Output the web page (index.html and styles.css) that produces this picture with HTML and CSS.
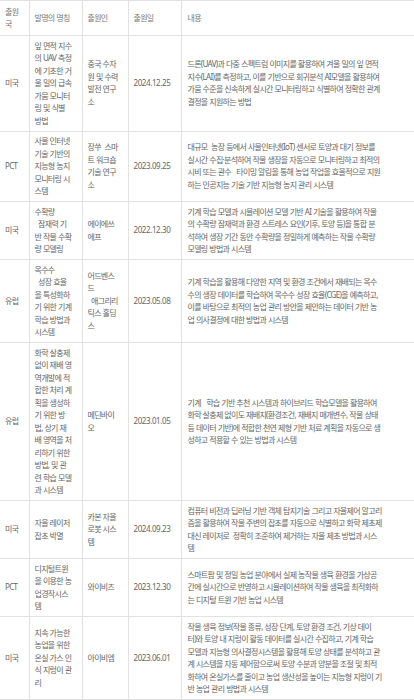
FILE: index.html
```html
<!DOCTYPE html>
<html lang="ko">
<head>
<meta charset="utf-8">
<title>특허 목록</title>
<link rel="stylesheet" href="styles.css">
</head>
<body>
<table class="patents">
  <colgroup>
    <col class="c-country">
    <col class="c-title">
    <col class="c-applicant">
    <col class="c-date">
    <col class="c-desc">
  </colgroup>
  <thead>
    <tr>
      <th>출원<br>국</th>
      <th>발명의 명칭</th>
      <th>출원인</th>
      <th>출원일</th>
      <th class="desc">내용</th>
    </tr>
  </thead>
  <tbody>
    <tr>
      <td>미국</td>
      <td>잎 면적 지수<br>의 UAV 측정<br>에 기초한 거<br>울 밀의 급속<br>가뭄 모니터<br>링 및 식별<br>방법</td>
      <td>중국 수자<br>원 및 수력<br>발전 연구<br>소</td>
      <td class="date">2024.12.25</td>
      <td class="desc">드론(UAV)과 다중 스펙트럼 이미지를 활용하여 겨울 밀의 잎 면적<br>지수(LAI)를 측정하고, 이를 기반으로 회귀분석 AI모델을 활용하여<br>가뭄 수준을 신속하게 실시간 모니터링하고 식별하여 정확한 관계<br>결정을 지원하는 방법</td>
    </tr>
    <tr>
      <td>PCT</td>
      <td>사물 인터넷<br>기술 기반의<br>지능형 농지<br>모니터링 시<br>스템</td>
      <td>장쑤&nbsp; 스마<br>트 워크숍<br>기술 연구<br>소</td>
      <td class="date">2023.09.25</td>
      <td class="desc">대규모&nbsp; 농장 등에서 사물인터넷(IoT) 센서로 토양과 대기 정보를<br>실시간 수집·분석하여 작물 생장을 자동으로 모니터링하고 최적의<br>시비 또는 관수&nbsp; &nbsp;타이밍 알림을 통해 농업 작업을 효율적으로 지원<br>하는 인공지능 기술 기반 지능형 농지 관리 시스템</td>
    </tr>
    <tr>
      <td>미국</td>
      <td>수확량<br>&nbsp; 잠재력 기<br>반 작물 수확<br>량 모델링</td>
      <td>에이에쓰<br>에프</td>
      <td class="date">2022.12.30</td>
      <td class="desc">기계 학습 모델과 시뮬레이션 모델 기반 AI 기술을 활용하여 작물<br>의 수확량 잠재력과 환경 스트레스 요인(기후, 토양 등)을 통합 분<br>석하여 생장 기간 동안 수확량을 정밀하게 예측하는 작물 수확량<br>모델링 방법과 시스템</td>
    </tr>
    <tr>
      <td>유럽</td>
      <td>옥수수<br>&nbsp; 성장 효율<br>을 특성화하<br>기 위한 기계<br>학습 방법과<br>시스템</td>
      <td>어드벤스<br>드<br>&nbsp; 애그리리<br>틱스 홀딩<br>스</td>
      <td class="date">2023.05.08</td>
      <td class="desc">기계 학습을 활용해 다양한 지역 및 환경 조건에서 재배되는 옥수<br>수의 생장 데이터를 학습하여 옥수수 성장 효율(CGE)을 예측하고,<br>이를 바탕으로 최적의 농업 관리 방안을 제안하는 데이터 기반 농<br>업 의사결정에 대한 방법과 시스템</td>
    </tr>
    <tr>
      <td>유럽</td>
      <td>화학 살충제<br>없이 재배 영<br>역개발에 적<br>합한 처리 계<br>획을 생성하<br>기 위한 방<br>법, 상기 재<br>배 영역을 처<br>리하기 위한<br>방법, 및 관<br>련 학습 모델<br>과 시스템</td>
      <td>메딘바이<br>오</td>
      <td class="date">2023.01.05</td>
      <td class="desc">기계&nbsp; &nbsp;학습 기반 추천 시스템과 하이브리드 학습모델을 활용하여<br>화학 살충제 없이도 재배지(환경조건, 재배지 매개변수, 작물 상태<br>등 데이터 기반)에 적합한 천연 제형 기반 처료 계획을 자동으로 생<br>성하고 적용할 수 있는 방법과 시스템</td>
    </tr>
    <tr>
      <td>미국</td>
      <td>자율 레이저<br>잡초 박멸</td>
      <td>카본 자율<br>로봇 시스<br>템</td>
      <td class="date">2024.09.23</td>
      <td class="desc">컴퓨터 비전과 딥러닝 기반 객체 탐지기술 그리고 자율제어 알고리<br>즘을 활용하여 작물 주변의 잡초를 자동으로 식별하고 화학 제초제<br>대신 레이저로&nbsp; 정확히 조준하여 제거하는 자율 제초 방법과 시스<br>템</td>
    </tr>
    <tr>
      <td>PCT</td>
      <td>디지털트윈<br>을 이용한 농<br>업경작시스<br>템</td>
      <td>와이비즈</td>
      <td class="date">2023.12.30</td>
      <td class="desc">스마트팜 및 정밀 농업 분야에서 실제 농작물 생육 환경을 가상공<br>간에 실시간으로 반영하고 시뮬레이션하여 작물 생육을 최적화하<br>는 디지털 트윈 기반 농업 시스템</td>
    </tr>
    <tr>
      <td>미국</td>
      <td>지속 가능한<br>농업을 위한<br>온실 가스 인<br>식 지렁이 관<br>리</td>
      <td>아이비엠</td>
      <td class="date">2023.06.01</td>
      <td class="desc">작물 생육 정보(작물 종류, 성장 단계, 토양 환경 조건, 기상 데이<br>터)와 토양 내 지렁이 활동 데이터를 실시간 수집하고, 기계 학습<br>모델과 지능형 의사결정시스템을 활용해 토양 상태를 분석하고 관<br>계 시스템을 자동 제어함으로써 토양 수분과 양분을 조절 및 최적<br>화하여 온실가스를 줄이고 농업 생산성을 높이는 지능형 지렁이 기<br>반 농업 관리 방법과 시스템</td>
    </tr>
  </tbody>
</table>
</body>
</html>
```

FILE: styles.css
```css
html, body {
  margin: 0;
  padding: 0;
  background: #fff;
}

body {
  font-family: "Noto Sans", "Noto Sans CJK KR", sans-serif;
  font-size: 8px;
  letter-spacing: -0.7px;
  word-spacing: 0.4px;
  line-height: 12.5px;
  color: #666;
}

.patents {
  width: 414px;
  table-layout: fixed;
  border-collapse: collapse;
  border-top: 1px solid #e2e2e2;
}

.c-country { width: 29px; }
.c-title { width: 53px; }
.c-applicant { width: 46px; }
.c-date { width: 53px; }
.c-desc { width: 233px; }

.patents th,
.patents td {
  padding: 3.5px 4px 3.5px 5px;
  text-align: left;
  vertical-align: middle;
  font-weight: normal;
  white-space: nowrap;
  overflow: hidden;
  border-bottom: 1px solid #e2e2e2;
  border-left: 1px solid #e2e2e2;
}

.patents th {
  padding-top: 4.5px;
  padding-bottom: 4.5px;
  color: #777;
}

.patents th:first-child,
.patents td:first-child {
  border-left: none;
}

.patents .date {
  letter-spacing: -0.4px;
}

.patents .desc {
  padding-left: 6px;
  padding-right: 4px;
}
```
